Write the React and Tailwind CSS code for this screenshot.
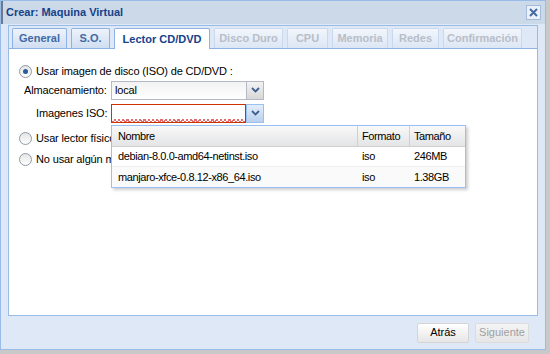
import React from "react";

const font = { fontFamily: "'Liberation Sans', Arial, sans-serif" };

function Radio({ checked }) {
  return (
    <span className="relative inline-block w-[13px] h-[13px] rounded-full border border-[#8e9aa8] bg-gradient-to-b from-[#e4e4e4] to-[#ffffff] shrink-0">
      {checked && (
        <span className="absolute left-[3px] top-[3px] w-[5px] h-[5px] rounded-full bg-[#2a5b9c]" />
      )}
    </span>
  );
}

function Trigger({ active }) {
  return (
    <div
      className={
        "w-[17px] h-full flex items-center justify-center border-l " +
        (active
          ? "bg-gradient-to-b from-[#e4eefb] to-[#b9d0ee] border-[#98c0f4]"
          : "bg-gradient-to-b from-[#f2f2f2] to-[#d8d8d8] border-[#b5b8c8]")
      }
    >
      <svg width="9" height="6" viewBox="0 0 9 6">
        <path d="M1 1 L4.5 4.5 L8 1" stroke="#3d5f8f" strokeWidth="1.8" fill="none" />
      </svg>
    </div>
  );
}

const tabs = [
  { t: "General", w: "w-[55px]" },
  { t: "S.O.", w: "w-[39px]" },
  { t: "Lector CD/DVD", active: true, w: "w-[96px]" },
  { t: "Disco Duro", disabled: true, w: "w-[69px]" },
  { t: "CPU", disabled: true, w: "w-[41px]" },
  { t: "Memoria", disabled: true, w: "w-[56px]" },
  { t: "Redes", disabled: true, w: "w-[47px]" },
  { t: "Confirmación", disabled: true, w: "w-[79px]" },
];

export default function App() {
  return (
    <div className="w-[550px] h-[354px] bg-[#c9c9c9] overflow-hidden text-[11px]" style={font}>
      <div className="w-[546px] h-[350px] bg-[#dfe8f6] border border-[#99bbe8] flex flex-col relative">
        {/* title bar */}
        <div className="h-[23px] flex items-center justify-between pl-[3px] pr-[4px] bg-[#ccd9e8] border-l-2 border-[#6c7a8c]">
          <span className="font-bold text-[#15428b] text-[11px]">Crear: Maquina Virtual</span>
          <div className="w-[15px] h-[15px] border border-[#a4bcd6] bg-[#eaf1fa] flex items-center justify-center">
            <svg width="9" height="9" viewBox="0 0 9 9">
              <path d="M1 1 L8 8 M8 1 L1 8" stroke="#456c9f" strokeWidth="2" />
            </svg>
          </div>
        </div>
        {/* body */}
        <div className="flex-1 flex flex-col px-[7px] pt-[1px] bg-[#dfe8f6]">
          <div className="flex-1 flex flex-col border border-[#99bbe8] bg-white">
            {/* tab strip */}
            <div className="h-[23px] bg-[#dfe8f6] border-b border-[#8db2e3] flex items-end gap-[4px] pl-[3px]">
              {tabs.map((tb) => (
                <div
                  key={tb.t}
                  className={
                    tb.w +
                    " h-[20px] flex items-center justify-center font-bold border border-b-0 rounded-t-[2px] whitespace-nowrap " +
                    (tb.active
                      ? "bg-white border-[#8db2e3] text-[#15428b] h-[21px] -mb-px"
                      : tb.disabled
                      ? "bg-gradient-to-b from-[#f2f6fc] to-[#dce6f4] border-[#c9d8ed] text-[#b8bec8]"
                      : "bg-gradient-to-b from-[#eef3fb] to-[#d0def2] border-[#8db2e3] text-[#416aa3]")
                  }
                >
                  {tb.t}
                </div>
              ))}
            </div>
            {/* content */}
            <div className="flex-1 relative pt-[14px] pl-[10px] text-[11px] tracking-[-0.15px] text-black">
              <div className="flex items-center gap-[4px] h-[16px]">
                <Radio checked />
                <span className="whitespace-nowrap">Usar imagen de disco (ISO) de CD/DVD :</span>
              </div>
              <div className="flex items-center mt-[1px] h-[20px]">
                <span className="w-[92px] shrink-0 pl-[5px] whitespace-nowrap">Almacenamiento:</span>
                <div className="w-[153px] h-[19px] flex border border-[#b5b8c8]">
                  <div className="flex-1 bg-gradient-to-b from-[#f2f2f2] to-white pl-[3px] leading-[17px]">local</div>
                  <Trigger />
                </div>
              </div>
              <div className="flex items-center mt-[3px] h-[20px]">
                <span className="w-[92px] shrink-0 pl-[17px] whitespace-nowrap">Imagenes ISO:</span>
                <div className="w-[153px] h-[19px] flex">
                  <div className="flex-1 border border-[#cc3300] bg-white relative">
                    <div
                      className="absolute left-0 right-0 bottom-0 h-[3px]"
                      style={{
                        backgroundImage:
                          "repeating-linear-gradient(45deg, #e46b6b 0 1px, transparent 1px 3px), repeating-linear-gradient(-45deg, #e46b6b 0 1px, transparent 1px 3px)",
                      }}
                    />
                  </div>
                  <div className="border border-l-0 border-[#98c0f4] h-full">
                    <Trigger active />
                  </div>
                </div>
              </div>
              <div className="flex items-center gap-[4px] mt-[7px] h-[16px]">
                <Radio />
                <span className="whitespace-nowrap">Usar lector físico de CD/DVD</span>
              </div>
              <div className="flex items-center gap-[4px] mt-[5px] h-[16px]">
                <Radio />
                <span className="whitespace-nowrap">No usar algún medio</span>
              </div>

              {/* dropdown list */}
              <div className="absolute left-[102px] top-[76px] w-[355px] bg-white border border-[#98c0f4] shadow-[2px_2px_3px_rgba(0,0,0,0.2)] text-[11px] tracking-[-0.4px]">
                <div className="flex h-[21px] items-center bg-gradient-to-b from-[#f9f9f9] to-[#e3e4e6] border-b border-[#d0d0d0]">
                  <div className="w-[246px] pl-[6px] border-r border-[#d0d0d0] h-full flex items-center">Nombre</div>
                  <div className="w-[52px] pl-[4px] border-r border-[#d0d0d0] h-full flex items-center">Formato</div>
                  <div className="flex-1 pl-[4px] h-full flex items-center">Tamaño</div>
                </div>
                <div className="flex h-[20px] items-center border-b border-[#ededed]">
                  <div className="w-[246px] pl-[6px]">debian-8.0.0-amd64-netinst.iso</div>
                  <div className="w-[52px] pl-[4px]">iso</div>
                  <div className="flex-1 pl-[4px]">246MB</div>
                </div>
                <div className="flex h-[20px] items-center bg-[#fafafa]">
                  <div className="w-[246px] pl-[6px]">manjaro-xfce-0.8.12-x86_64.iso</div>
                  <div className="w-[52px] pl-[4px]">iso</div>
                  <div className="flex-1 pl-[4px]">1.38GB</div>
                </div>
              </div>
            </div>
          </div>
          {/* footer */}
          <div className="h-[33px] flex items-center justify-end gap-[6px] pr-[9px]">
            <div className="w-[52px] h-[20px] flex items-center justify-center border border-[#d5d5d5] bg-gradient-to-b from-[#ffffff] to-[#e6e6e6] text-[11px] text-black rounded-[2px]">
              Atrás
            </div>
            <div className="w-[54px] h-[20px] flex items-center justify-center border border-[#dcdcdc] bg-gradient-to-b from-[#f4f4f4] to-[#e6e6e6] text-[11px] text-[#a0a0a0] rounded-[2px]">
              Siguiente
            </div>
          </div>
        </div>
      </div>
    </div>
  );
}
